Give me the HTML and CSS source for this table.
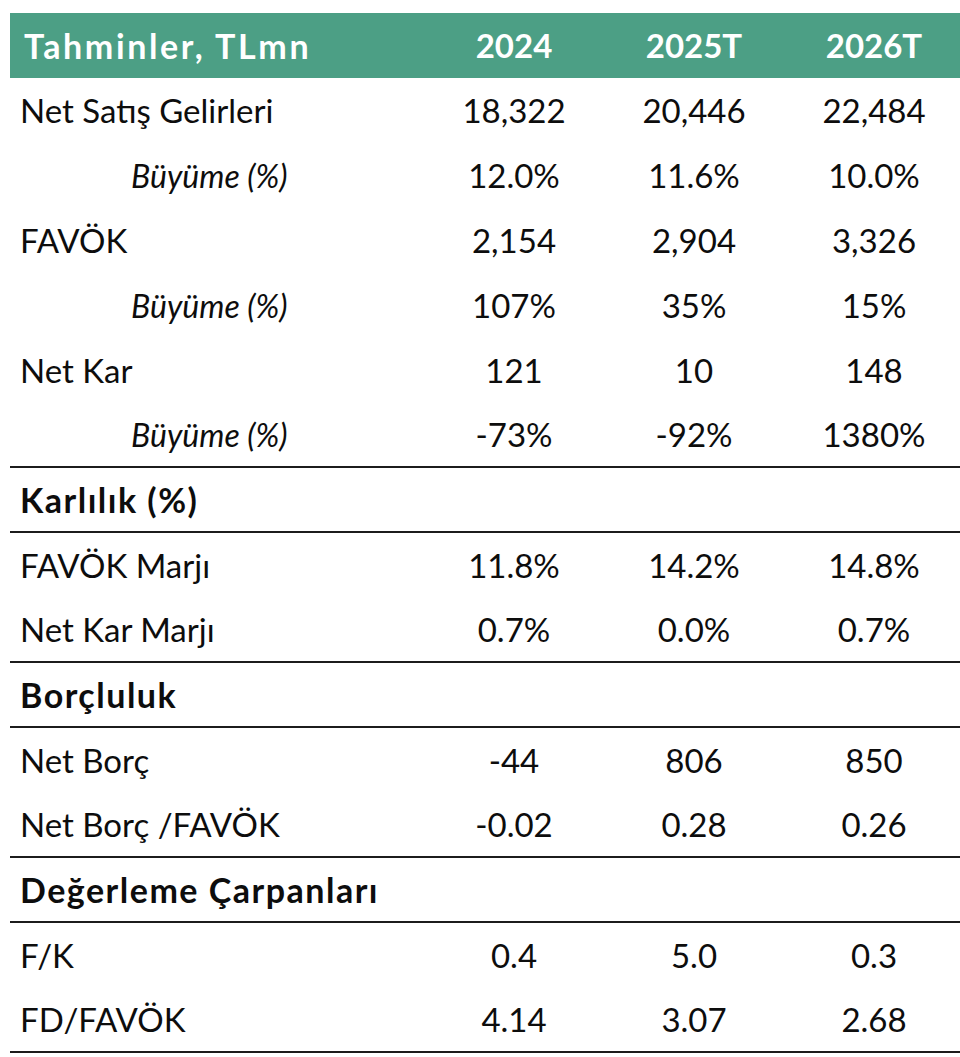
FILE: index.html
```html
<!DOCTYPE html>
<html lang="tr">
<head>
<meta charset="utf-8">
<title>Tahminler</title>
<link rel="stylesheet" href="styles.css">
</head>
<body>
<table class="fin">
  <thead>
    <tr class="head">
      <th class="lbl">Tahminler, TLmn</th>
      <th>2024</th>
      <th>2025T</th>
      <th>2026T</th>
    </tr>
  </thead>
  <tbody>
    <tr><td class="lbl">Net Satış Gelirleri</td><td>18,322</td><td>20,446</td><td>22,484</td></tr>
    <tr><td class="lbl sub">Büyüme (%)</td><td>12.0%</td><td>11.6%</td><td>10.0%</td></tr>
    <tr><td class="lbl">FAVÖK</td><td>2,154</td><td>2,904</td><td>3,326</td></tr>
    <tr><td class="lbl sub">Büyüme (%)</td><td>107%</td><td>35%</td><td>15%</td></tr>
    <tr><td class="lbl">Net Kar</td><td>121</td><td>10</td><td>148</td></tr>
    <tr class="end"><td class="lbl sub">Büyüme (%)</td><td>-73%</td><td>-92%</td><td>1380%</td></tr>
    <tr class="sect end"><td class="lbl">Karlılık (%)</td><td></td><td></td><td></td></tr>
    <tr><td class="lbl">FAVÖK Marjı</td><td>11.8%</td><td>14.2%</td><td>14.8%</td></tr>
    <tr class="end"><td class="lbl">Net Kar Marjı</td><td>0.7%</td><td>0.0%</td><td>0.7%</td></tr>
    <tr class="sect end"><td class="lbl">Borçluluk</td><td></td><td></td><td></td></tr>
    <tr><td class="lbl">Net Borç</td><td>-44</td><td>806</td><td>850</td></tr>
    <tr class="end"><td class="lbl">Net Borç /FAVÖK</td><td>-0.02</td><td>0.28</td><td>0.26</td></tr>
    <tr class="sect end"><td class="lbl">Değerleme Çarpanları</td><td></td><td></td><td></td></tr>
    <tr><td class="lbl">F/K</td><td>0.4</td><td>5.0</td><td>0.3</td></tr>
    <tr class="end"><td class="lbl">FD/FAVÖK</td><td>4.14</td><td>3.07</td><td>2.68</td></tr>
  </tbody>
</table>
</body>
</html>
```

FILE: styles.css
```css
html, body {
  margin: 0;
  padding: 0;
  background: #ffffff;
}

body {
  padding: 13px 0 0 10px;
  font-family: "Lato", "Open Sans", sans-serif;
  color: #0d0d0d;
}

.fin {
  width: 950px;
  border-collapse: collapse;
  table-layout: fixed;
  font-size: 33px;
}

.fin th,
.fin td {
  height: 65px;
  padding: 0;
  text-align: center;
  vertical-align: middle;
  width: 180px;
  line-height: 1;
}

.fin .lbl {
  width: 400px;
  text-align: left;
  padding-left: 10px;
}

.head th {
  background: #4c9f85;
  color: #ffffff;
  font-weight: 700;
  height: 65px;
  font-size: 33px;
}

.head th.lbl {
  padding-left: 14px;
  font-size: 34px;
  letter-spacing: 2.6px;
}

.fin td.sub {
  font-style: italic;
  padding-left: 121px;
  font-size: 32px;
}

.sect td {
  font-weight: 700;
  font-size: 34px;
  letter-spacing: 1.5px;
}

.end td {
  height: 63px;
  border-bottom: 2px solid #1c1c1c;
}
```
